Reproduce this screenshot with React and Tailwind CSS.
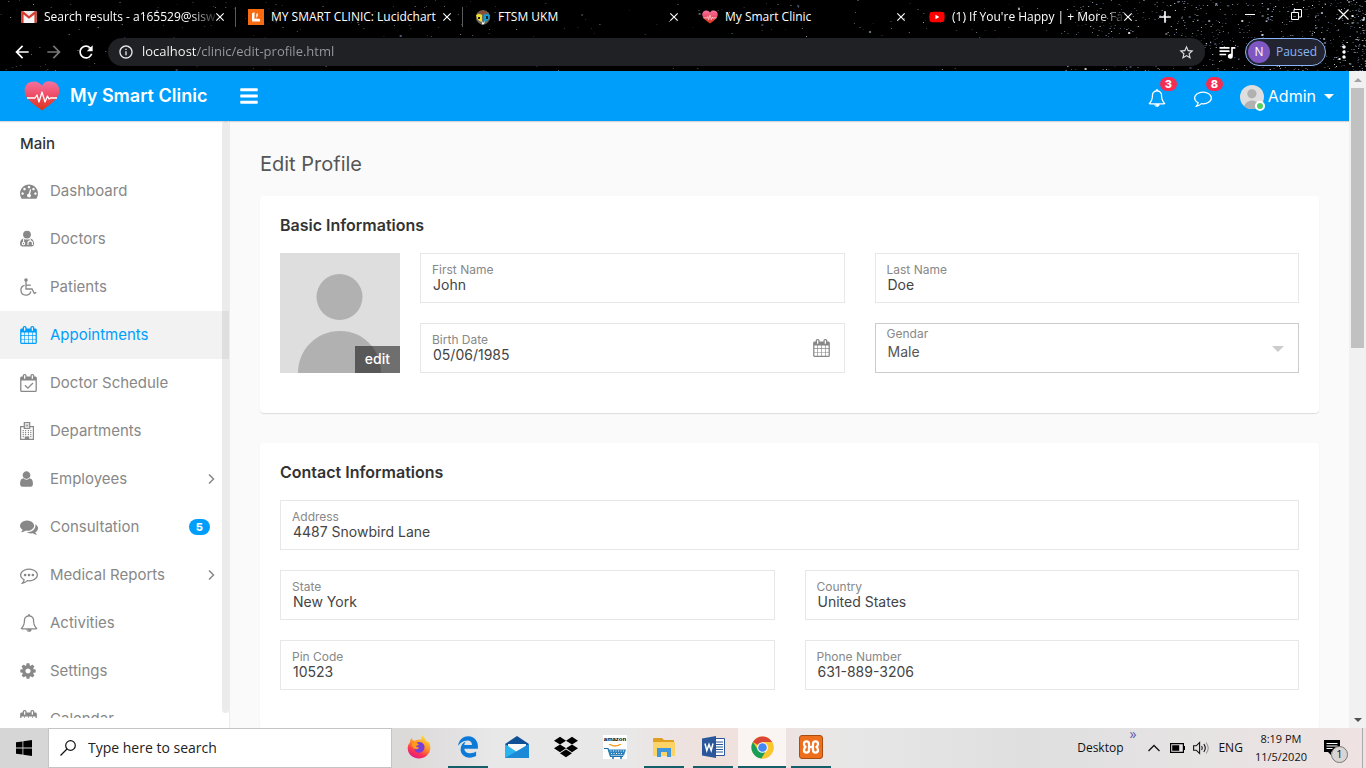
import React, { useId } from "react";
import {
  MdArrowBack,
  MdArrowForward,
  MdRefresh,
  MdInfoOutline,
  MdStarBorder,
  MdQueueMusic,
  MdClose,
  MdAdd,
  MdMoreVert,
} from "react-icons/md";
import { FaYoutube, FaDropbox, FaEdgeLegacy } from "react-icons/fa6";
import { FaBars } from "react-icons/fa";

const dot = "q0-53-37.5-90.5t-90.5-37.5-90.5 37.5-37.5 90.5 37.5 90.5 90.5 37.5 90.5-37.5 37.5-90.5z";

const bubble =
  "M896 384q-204 0-381.5 69.5t-282 187.5-104.5 255q0 112 71.5 213.5t201.5 175.5l87 50-27 96q-24 91-70 172 152-63 275-171l43-38 57 6q69 8 130 8 204 0 381.5-69.5t282-187.5 104.5-255-104.5-255-282-187.5-381.5-69.5zm896 512q0 174-120 321.5t-326 233-450 85.5q-70 0-145-8-198 175-460 242-49 14-114 22h-5q-15 0-27-10.5t-16-27.5v-1q-3-4-.5-12t2-10 4.5-9.5l6-9 7-8.5 8-9q7-8 31-34.5t34.5-38 31-39.5 32.5-51 27-59 26-76q-157-89-247.5-220t-90.5-281q0-174 120-321.5t326-233 450-85.5 450 85.5 326 233 120 321.5z";

const glyphs = {
  gauge: {
    box: "0 0 1792 1792",
    d: `M384 1152${dot}M576 704${dot}M1004 1185l101-382q6-26-7.5-48.5t-38.5-29.5-48 6.5-30 39.5l-101 382q-60 5-107 43.5t-63 98.5q-20 77 20 146t117 89 146-20 89-117q16-60-6-117t-72-91zM1664 1152${dot}M1024 512${dot}M1472 704${dot}M1792 1152q0 261-141 483-19 29-54 29h-1402q-35 0-54-29-141-221-141-483 0-182 71-348t191-286 286-191 348-71 348 71 286 191 191 286 71 348z`,
  },
  calendar: {
    box: "64 0 1664 1792",
    d: "M192 1664h288v-288h-288v288zm352 0h320v-288h-320v288zm-352-352h288v-320h-288v320zm352 0h320v-320h-320v320zm-352-384h288v-288h-288v288zm736 736h320v-288h-320v288zm-384-736h320v-288h-320v288zm768 736h288v-288h-288v288zm-384-352h320v-320h-320v320zm-352-864v-288q0-13-9.5-22.5t-22.5-9.5h-64q-13 0-22.5 9.5t-9.5 22.5v288q0 13 9.5 22.5t22.5 9.5h64q13 0 22.5-9.5t9.5-22.5zm736 864h288v-320h-288v320zm-384-384h320v-288h-320v288zm384 0h288v-288h-288v288zm32-480v-288q0-13-9.5-22.5t-22.5-9.5h-64q-13 0-22.5 9.5t-9.5 22.5v288q0 13 9.5 22.5t22.5 9.5h64q13 0 22.5-9.5t9.5-22.5zm384-64v1280q0 52-38 90t-90 38h-1408q-52 0-90-38t-38-90v-1280q0-52 38-90t90-38h128v-96q0-66 47-113t113-47h64q66 0 113 47t47 113v96h384v-96q0-66 47-113t113-47h64q66 0 113 47t47 113v96h128q52 0 90 38t38 90z",
  },
  calendarCheck: {
    box: "0 0 1664 1792",
    d: "M1303 964l-512 512q-10 9-23 9t-23-9l-288-288q-9-10-9-23t9-22l46-46q9-9 22-9t23 9l220 220 444-444q10-9 23-9t22 9l46 46q9 9 9 22t-9 23zm-1175 700h1408v-1024h-1408v1024zm384-1216v-288q0-14-9-23t-23-9h-64q-14 0-23 9t-9 23v288q0 14 9 23t23 9h64q14 0 23-9t9-23zm768 0v-288q0-14-9-23t-23-9h-64q-14 0-23 9t-9 23v288q0 14 9 23t23 9h64q14 0 23-9t9-23zm384-64v1280q0 52-38 90t-90 38h-1408q-52 0-90-38t-38-90v-1280q0-52 38-90t90-38h128v-96q0-66 47-113t113-47h64q66 0 113 47t47 113v96h384v-96q0-66 47-113t113-47h64q66 0 113 47t47 113v96h128q52 0 90 38t38 90z",
  },
  cog: {
    box: "128 0 1536 1792",
    d: "M1152 896q0-106-75-181t-181-75-181 75-75 181 75 181 181 75 181-75 75-181zm512-109v222q0 12-8 23t-20 13l-185 28q-19 54-39 91 35 50 107 138 10 12 10 25t-9 23q-27 37-99 108t-94 71q-12 0-26-9l-138-108q-44 23-91 38-16 136-29 186-7 28-36 28h-222q-14 0-24.5-8.5t-11.5-21.5l-28-184q-49-16-90-37l-141 107q-10 9-25 9-14 0-25-11-126-114-165-168-7-10-7-23 0-12 8-23 15-21 51-66.5t54-70.5q-27-50-41-99l-183-27q-13-2-21-12.5t-8-23.5v-222q0-12 8-23t19-13l186-28q14-46 39-92-40-57-107-138-10-12-10-24 0-10 9-23 26-36 98.5-107.5t94.5-71.5q13 0 26 10l138 107q44-23 91-38 16-136 29-186 7-28 36-28h222q14 0 24.5 8.5t11.5 21.5l28 184q49 16 90 37l142-107q9-9 24-9 13 0 25 10 129 119 165 170 7 8 7 22 0 12-8 23-15 21-51 66.5t-54 70.5q26 50 41 98l183 28q13 2 21 12.5t8 23.5z",
  },
  user: {
    box: "256 0 1280 1792",
    d: "M1536 1399q0 109-62.5 187t-150.5 78h-854q-88 0-150.5-78t-62.5-187q0-85 8.5-160.5t31.5-152 58.5-131 94-89 134.5-34.5q131 128 313 128t313-128q76 0 134.5 34.5t94 89 58.5 131 31.5 152 8.5 160.5zm-256-887q0 159-112.5 271.5t-271.5 112.5-271.5-112.5-112.5-271.5 112.5-271.5 271.5-112.5 271.5 112.5 112.5 271.5z",
  },
  comments: {
    box: "0 0 1792 1792",
    d: "M1408 768q0 139-94 257t-256.5 186.5-353.5 68.5q-86 0-176-16-124 88-278 128-36 9-86 16h-3q-11 0-20.5-8t-11.5-21q-1-3-1-6.5t.5-6.5 2-6l2.5-5 3.5-5.5 4-5 4.5-5 4-4.5q5-6 23-25t26-29.5 22.5-29 25-38.5 20.5-44q-124-72-195-177t-71-224q0-139 94-257t256.5-186.5 353.5-68.5 353.5 68.5 256.5 186.5 94 257zm384 256q0 120-71 224.5t-195 176.5q10 24 20.5 44t25 38.5 22.5 29 26 29.5 23 25q1 1 4 4.5t4.5 5 4 5 3.5 5.5l2.5 5 2 6 .5 6.5-1 6.5q-3 14-13 22t-22 7q-50-7-86-16-154-40-278-128-90 16-176 16-271 0-472-132 58 4 88 4 161 0 309-45t264-129q125-92 192-212t67-254q0-77-23-152 129 71 204 178t75 230z",
  },
  comment: { box: "0 0 1792 1792", d: bubble },
  commenting: {
    box: "0 0 1792 1792",
    d: `M640 896${dot}M1024 896${dot}M1408 896${dot}${bubble}`,
  },
  bell: {
    box: "0 0 1792 1792",
    d: "M912 1696q0-16-16-16-59 0-101.5-42.5t-42.5-101.5q0-16-16-16t-16 16q0 73 51.5 124.5t124.5 51.5q16 0 16-16zm-666-288h1300q-266-300-266-832 0-51-24-105t-69-103-121.5-80.5-169.5-31.5-169.5 31.5-121.5 80.5-69 103-24 105q0 532-266 832zm1482 0q0 52-38 90t-90 38h-448q0 106-75 181t-181 75-181-75-75-181h-448q-52 0-90-38t-38-90q50-42 91-88t85-119.5 74.5-158.5 50-206 19.5-260q0-152 117-282.5t307-158.5q-8-19-8-39 0-40 28-68t68-28 68 28 28 68q0 20-8 39 190 28 307 158.5t117 282.5q0 139 19.5 260t50 206 74.5 158.5 85 119.5 91 88z",
  },
};

function Glyph({ name, className }) {
  const g = glyphs[name];
  return (
    <svg viewBox={g.box} className={className} fill="currentColor" fillRule="evenodd" aria-hidden="true">
      <path d={g.d} />
    </svg>
  );
}

function DoctorIcon({ className }) {
  return (
    <svg viewBox="0 0 14 18" className={className} aria-hidden="true">
      <circle cx="7" cy="4.600" r="3.900" fill="currentColor" />
      <path
        fill="currentColor"
        d="M3.400 8.400C1 9 0 11 0 13.800C0 15.500 1 16.500 2.600 16.500h8.800C13 16.500 14 15.500 14 13.800C14 11 13 9 10.600 8.400C8.600 10 5.400 10 3.400 8.400z"
      />
      <g fill="none" stroke="#fff" strokeWidth="1.100">
        <path d="M3.600 8.800v3.400" />
        <circle cx="3.500" cy="13.500" r="1.200" />
        <path d="M10.200 8.800v2M8 15v-1.900a2.200 2.200 0 0 1 4.400 0V15" />
      </g>
    </svg>
  );
}

function WheelchairIcon({ className }) {
  return (
    <svg viewBox="0 0 17 18" className={className} fill="none" stroke="currentColor" strokeWidth="1.300" aria-hidden="true">
      <circle cx="6" cy="2" r="1.800" fill="currentColor" stroke="none" />
      <path d="M6 3v8h6l2.300 4.300 2-1" />
      <path d="M6 7.200h4.800" />
      <path d="M4.600 7.400a5 5 0 1 0 6.200 6" />
    </svg>
  );
}

function HospitalIcon({ className }) {
  return (
    <svg viewBox="0 0 14 18" className={className} aria-hidden="true">
      <g fill="none" stroke="currentColor" strokeWidth="1.200">
        <path d="M4 4.600H.6v12.800h12.800V4.600H10" />
        <path d="M4.300 6.400V.6h5.400v5.800z" />
        <path d="M6.100 2v3M7.900 2v3M6.100 3.500h1.800" strokeWidth="0.700" />
      </g>
      <g fill="currentColor">
        {[8, 10, 12].map((y) => [2.6, 5, 7.8, 10.2].map((x) => <rect key={`${x}-${y}`} x={x} y={y} width="1.200" height="1.200" />))}
        <rect x="2.600" y="14" width="1.200" height="1.200" />
        <rect x="10.200" y="14" width="1.200" height="1.200" />
        <rect x="4.800" y="14.400" width="4.400" height="3" />
      </g>
    </svg>
  );
}

function Heart({ className }) {
  const id = useId();
  return (
    <svg viewBox="0 0 36 30" className={className} aria-hidden="true">
      <defs>
        <linearGradient id={id} x1="0" y1="0" x2="0" y2="1">
          <stop offset="0" stopColor="#f472a0" />
          <stop offset="0.500" stopColor="#ee4b62" />
          <stop offset="1" stopColor="#dc3519" />
        </linearGradient>
      </defs>
      <path
        fill={`url(#${id})`}
        d="M18 29.500C13 25.500 6 21.500 2.500 16C-1 10 .5 3 6.500 1C11-.5 16 1 18 5C20-.0 25-.5 29.500 1C35.500 3 37 10 33.500 16C30 21.500 23 25.500 18 29.500z"
      />
      <path
        d="M3 17h8l2-3 2 7 3-10 3 10 2.500-6 1.500 3 1.500-1H33"
        fill="none"
        stroke="#fff"
        strokeWidth="1.300"
        strokeLinejoin="round"
      />
    </svg>
  );
}

function Avatar({ className }) {
  return (
    <svg viewBox="0 0 120 120" className={className} aria-hidden="true">
      <rect width="120" height="120" fill="#dedede" />
      <g fill="#b1b1b1">
        <circle cx="59.500" cy="44" r="23" />
        <path d="M18 120C18 97 36 78 60 78S101 97 101 120z" />
      </g>
    </svg>
  );
}

/* Star field behind the browser's tab strip, denser towards the right edge. */
function buildStars() {
  let seed = 4211;
  const next = () => {
    seed = (seed * 16807) % 2147483647;
    return seed / 2147483647;
  };
  const stars = [];
  const colours = ["#ffffff", "#9fb4d8", "#5f7396", "#c8d6f0"];
  for (let i = 0; i < 1150; i += 1) {
    const dense = i > 430;
    const x = dense ? 100 - Math.pow(next(), 1.5) * 22 : next() * 100;
    stars.push({
      x: `${x.toFixed(2)}%`,
      y: Math.floor(next() * 71),
      s: next() > 0.95 ? 2 : 1,
      o: dense ? 0.25 + next() * 0.7 : 0.15 + next() * 0.5,
      c: colours[Math.floor(next() * 4)],
    });
  }
  return stars;
}
const stars = buildStars();

function StarField() {
  return (
    <svg className="absolute inset-0 h-full w-full" aria-hidden="true">
      {stars.map((s, i) => (
        <rect key={i} x={s.x} y={s.y} width={s.s} height={s.s} fill={s.c} opacity={s.o} />
      ))}
    </svg>
  );
}

function GmailIcon() {
  return (
    <svg viewBox="0 0 14 11" className="h-3 w-4" aria-hidden="true">
      <rect width="14" height="11" rx="1" fill="#e8e8e8" />
      <path d="M2 11V3l5 4 5-4v8z" fill="#f6f6f6" />
      <path d="M0 1v9q0 1 1 1h1V3.200l5 4 5-4V11h1q1 0 1-1V1q0-1-1.500-1L7 4.600 1.500 0Q0 0 0 1z" fill="#d93a2f" />
    </svg>
  );
}

function LucidIcon() {
  return (
    <svg viewBox="0 0 16 16" className="size-4" aria-hidden="true">
      <rect width="16" height="16" fill="#f96b13" />
      <path d="M4 4.500 6.500 3v7.500L4 12z" fill="#fff" />
      <path d="M4 12l3.500-2.500 4.500.5v2.500H4z" fill="#fff" />
      <path d="M8 5l2-1v3l-2 2z" fill="#ffd7b8" />
    </svg>
  );
}

function CrestIcon() {
  return (
    <svg viewBox="0 0 16 16" className="size-4" aria-hidden="true">
      <path d="M2 4q6-6 12 0l1 6q-2 5-7 6-5-1-7-6z" fill="#6b6a5c" />
      <path d="M3 4q5-5 10 0L8 5z" fill="#8d4b32" />
      <path d="M1 6q3-2 6 0v7q-5-1-6-7z" fill="#f2dc2c" />
      <path d="M9 6q3-2 6 0 0 5-6 7z" fill="#159bd3" />
      <path d="M3 8h2v2H3zM11 7h2v3h-2z" fill="#222" />
      <path d="M7 12l1 2 2-2-1 3-2 .5z" fill="#fff" />
    </svg>
  );
}

function YoutubeIcon() {
  return (
    <span className="relative flex size-4 items-center justify-center">
      <span className="absolute h-2 w-2 bg-white" />
      <FaYoutube className="relative size-4 text-[#f00]" />
    </span>
  );
}

const tabs = [
  { title: "Search results - a165529@sisw", icon: <GmailIcon />, fade: true },
  { title: "MY SMART CLINIC: Lucidchart", icon: <LucidIcon />, line: true },
  { title: "FTSM UKM", icon: <CrestIcon />, line: true },
  { title: "My Smart Clinic", icon: <Heart className="size-4" /> },
  { title: "(1) If You're Happy | + More Fa", icon: <YoutubeIcon />, fade: true },
];

function Browser() {
  return (
    <div className="relative shrink-0 overflow-hidden bg-black font-['Open_Sans',sans-serif] text-white">
      <StarField />
      <div className="relative flex h-[38px] items-start">
        <div className="flex h-[34px] min-w-0 items-center pl-2" role="tablist">
          {tabs.map((t) => (
            <div key={t.title} className="flex w-[227px] min-w-0 items-center pr-px">
              <span className={t.line ? "h-5 w-px bg-[#5b5b5b]" : "h-5 w-px"} />
              <button type="button" role="tab" className="flex min-w-0 flex-1 items-center gap-[7px] pl-3 text-left">
                <span className="flex size-4 shrink-0 items-center justify-center">{t.icon}</span>
                <span
                  className={
                    t.fade
                      ? "text-xs whitespace-nowrap [mask-image:linear-gradient(to_right,#000_85%,rgba(0,0,0,0.15))]"
                      : "text-xs whitespace-nowrap"
                  }
                >
                  {t.title}
                </span>
              </button>
              <button type="button" aria-label="Close tab" className="mr-1.5 flex size-4 items-center justify-center">
                <MdClose className="size-3.5" />
              </button>
            </div>
          ))}
          <button type="button" aria-label="New tab" className="ml-3 flex items-center">
            <MdAdd className="size-5" />
          </button>
        </div>
        <div className="ml-auto flex h-7 items-center gap-9 pr-[17px]">
          <button type="button" aria-label="Minimise" className="h-px w-2.5 bg-white" />
          <button type="button" aria-label="Restore">
            <svg viewBox="0 0 11 11" className="size-[11px]" fill="none" stroke="#fff">
              <path d="M.5 3.500h7v7h-7zM3 3V.5h7.500V8H8" />
            </svg>
          </button>
          <button type="button" aria-label="Close window">
            <svg viewBox="0 0 11 11" className="size-[11px]" fill="none" stroke="#fff" strokeWidth="1.200">
              <path d="M.5.5l10 10M10.500.5l-10 10" />
            </svg>
          </button>
        </div>
      </div>
      <div className="relative flex h-[33px] items-start gap-3 pr-3 pl-3">
        <div className="flex h-7 items-center gap-3">
          <button type="button" aria-label="Back">
            <MdArrowBack className="size-5" />
          </button>
          <button type="button" aria-label="Forward">
            <MdArrowForward className="size-5 text-[#777]" />
          </button>
          <button type="button" aria-label="Reload">
            <MdRefresh className="size-5" />
          </button>
        </div>
        <div className="flex h-7 min-w-0 flex-1 items-center rounded-full bg-[#202124] pr-2.5 pl-2.5">
          <MdInfoOutline className="size-4 text-[#e8eaed]" />
          <input
            aria-label="Address"
            defaultValue="localhost/clinic/edit-profile.html"
            className="ml-2 min-w-0 flex-1 bg-[linear-gradient(to_right,#fff_54px,#989ba0_54px)] bg-clip-text text-[13px] text-transparent outline-none"
          />
          <MdStarBorder className="size-[17px] text-[#dadce0]" />
        </div>
        <div className="flex h-7 items-center">
          <button type="button" aria-label="Media">
            <MdQueueMusic className="size-5" />
          </button>
          <button
            type="button"
            className="ml-2 flex h-7 items-center gap-1.5 rounded-full border border-[#8ab4f8] bg-[#22252f] pr-2 pl-0.5 text-xs text-[#8ab4f8]"
          >
            <span className="flex size-[22px] items-center justify-center rounded-full bg-[#7e57c2] text-white">N</span>
            Paused
          </button>
          <button type="button" aria-label="Menu" className="ml-2">
            <MdMoreVert className="size-5" />
          </button>
        </div>
      </div>
    </div>
  );
}

function CountedButton({ label, icon, count }) {
  return (
    <button type="button" aria-label={label} className="relative mr-7 pt-1">
      <Glyph name={icon} className="size-[18px]" />
      <span className="absolute -top-2 left-3 rounded-full bg-[#f62d51] px-[5px] text-[11px] leading-[14px] font-extrabold">
        {count}
      </span>
    </button>
  );
}

function Topbar() {
  return (
    <header className="z-10 flex h-[50px] shrink-0 items-center bg-[#009efb] text-white shadow-[0_1px_1px_rgba(0,0,0,0.15)]">
      <a href="#home" className="ml-6 flex items-center gap-2.5 text-lg font-semibold">
        <Heart className="h-[30px] w-9" />
        My Smart Clinic
      </a>
      <button type="button" aria-label="Toggle menu" className="ml-8">
        <FaBars className="size-5" />
      </button>
      <div className="ml-auto flex items-center pr-[15px]">
        <CountedButton label="Notifications" icon="bell" count="3" />
        <CountedButton label="Messages" icon="comment" count="8" />
        <button type="button" className="flex items-center gap-1 text-base">
          <span className="relative pt-0.5">
            <Avatar className="size-6 rounded-full" />
            <span className="absolute -right-px -bottom-0.5 size-2.5 rounded-full border-2 border-white bg-[#55ce63]" />
          </span>
          Admin
          <span className="ml-1 border-x-[5px] border-t-[5px] border-x-transparent border-t-white" />
        </button>
      </div>
    </header>
  );
}

const menu = [
  { label: "Dashboard", icon: <Glyph name="gauge" className="size-[18px]" /> },
  { label: "Doctors", icon: <DoctorIcon className="h-[18px] w-3.5" /> },
  { label: "Patients", icon: <WheelchairIcon className="h-[18px] w-[17px]" /> },
  { label: "Appointments", icon: <Glyph name="calendar" className="h-[18px] w-[17px]" />, active: true },
  { label: "Doctor Schedule", icon: <Glyph name="calendarCheck" className="h-[18px] w-[17px]" /> },
  { label: "Departments", icon: <HospitalIcon className="h-[18px] w-3.5" /> },
  { label: "Employees", icon: <Glyph name="user" className="h-[18px] w-[13px]" />, arrow: true },
  { label: "Consultation", icon: <Glyph name="comments" className="size-[18px]" />, badge: "5" },
  { label: "Medical Reports", icon: <Glyph name="commenting" className="size-[18px]" />, arrow: true },
  { label: "Activities", icon: <Glyph name="bell" className="size-[18px]" /> },
  { label: "Settings", icon: <Glyph name="cog" className="h-[18px] w-4" /> },
  { label: "Calendar", icon: <Glyph name="calendar" className="h-[18px] w-[17px]" /> },
];

function Sidebar() {
  return (
    <aside className="relative flex w-[230px] shrink-0 flex-col border-r border-[#ececec] bg-white pb-2.5">
      <nav className="min-h-0 flex-1 overflow-hidden text-[15px] text-[#888]">
        <h2 className="flex h-[46px] items-center px-5 font-medium text-[#333]">Main</h2>
        <ul>
          {menu.map((m) => (
            <li key={m.label}>
              <a
                href={`#${m.label}`}
                className={
                  m.active
                    ? "flex h-12 items-center bg-[#f2f2f2] pr-[19px] pl-5 text-[#009efb]"
                    : "flex h-12 items-center pr-[19px] pl-5"
                }
              >
                <span className="w-[30px]">{m.icon}</span>
                {m.label}
                {m.badge && (
                  <span className="ml-auto rounded-full bg-[#009efb] px-[7px] text-[11px] leading-4 font-extrabold text-white">
                    {m.badge}
                  </span>
                )}
                {m.arrow && (
                  <svg viewBox="0 0 8 12" className="-mr-1.5 ml-auto h-3 w-2" fill="none" stroke="currentColor" strokeWidth="1.500">
                    <path d="M1 1.500 5.500 6 1 10.500" />
                  </svg>
                )}
              </a>
            </li>
          ))}
        </ul>
      </nav>
      <div className="absolute top-0 right-0 bottom-[15px] w-[7px] rounded-full bg-black/8" />
    </aside>
  );
}

function Field({ label, value, icon }) {
  const id = useId();
  return (
    <div className="flex h-[50px] items-center border border-[#e7e7e7] bg-white pr-3.5 pl-[11px]">
      <div className="flex min-w-0 flex-1 flex-col pb-px">
        <label htmlFor={id} className="text-xs leading-[15px] text-[#888]">
          {label}
        </label>
        <input id={id} defaultValue={value} className="h-4 w-full pl-px text-sm leading-4 text-[#444] outline-none" />
      </div>
      {icon}
    </div>
  );
}

function SelectField({ label, value, options }) {
  const id = useId();
  return (
    <div className="flex h-[50px] items-center border border-[#ccc] bg-white pr-3.5 pl-[11px]">
      <div className="flex min-w-0 flex-1 flex-col pb-2">
        <label htmlFor={id} className="text-xs leading-4 text-[#888]">
          {label}
        </label>
        <select id={id} defaultValue={value} className="h-5 w-full appearance-none pl-px text-sm leading-5 text-[#555] outline-none">
          {options.map((o) => (
            <option key={o}>{o}</option>
          ))}
        </select>
      </div>
      <span className="mt-0.5 border-x-[6px] border-t-[6px] border-x-transparent border-t-[#ccc]" />
    </div>
  );
}

function Card({ title, children }) {
  return (
    <section className="mb-[30px] rounded bg-white px-5 pt-[19px] pb-10 shadow-[0_1px_1px_rgba(0,0,0,0.12)]">
      <h3 className="mb-[18px] text-base leading-5 font-semibold text-[#333]">{title}</h3>
      {children}
    </section>
  );
}

function Profile() {
  return (
    <main className="min-w-0 flex-1 overflow-hidden bg-[#fafafa] px-[30px] pt-[31px]">
      <h1 className="mb-[19px] text-xl leading-[25px] text-[#565656]">Edit Profile</h1>
      <Card title="Basic Informations">
        <div className="flex gap-5">
          <div className="relative size-[120px] shrink-0">
            <Avatar className="size-[120px]" />
            <button
              type="button"
              className="absolute right-0 bottom-0 h-[27px] bg-black/50 px-2.5 pb-0.5 text-sm font-medium text-white"
            >
              edit
            </button>
          </div>
          <div className="grid flex-1 grid-cols-2 gap-x-[30px] gap-y-5">
            <Field label="First Name" value="John" />
            <Field label="Last Name" value="Doe" />
            <Field
              label="Birth Date"
              value="05/06/1985"
              icon={<Glyph name="calendar" className="h-[18px] w-[17px] text-[#888]" />}
            />
            <SelectField label="Gendar" value="Male" options={["Male", "Female"]} />
          </div>
        </div>
      </Card>
      <Card title="Contact Informations">
        <div className="grid grid-cols-2 gap-x-[30px] gap-y-5">
          <div className="col-span-2">
            <Field label="Address" value="4487 Snowbird Lane" />
          </div>
          <Field label="State" value="New York" />
          <Field label="Country" value="United States" />
          <Field label="Pin Code" value="10523" />
          <Field label="Phone Number" value="631-889-3206" />
        </div>
      </Card>
    </main>
  );
}

function PageScrollbar() {
  return (
    <div className="flex w-[17px] shrink-0 flex-col items-center bg-[#f1f1f1]">
      <span className="flex h-[17px] items-center">
        <span className="border-x-4 border-b-4 border-x-transparent border-b-[#a3a3a3]" />
      </span>
      <div className="h-[260px] w-[13px] bg-[#c1c1c1]" />
      <span className="mt-auto flex h-[17px] items-center">
        <span className="border-x-4 border-t-4 border-x-transparent border-t-[#505050]" />
      </span>
    </div>
  );
}

function FirefoxIcon() {
  return (
    <svg viewBox="0 0 24 24" className="size-6" aria-hidden="true">
      <defs>
        <linearGradient id="fox" x1="0.800" y1="0" x2="0.300" y2="1">
          <stop offset="0" stopColor="#ffe83f" />
          <stop offset="0.450" stopColor="#ff9325" />
          <stop offset="0.750" stopColor="#fb3650" />
          <stop offset="1" stopColor="#e31587" />
        </linearGradient>
      </defs>
      <path
        d="M16 0c-2 2-1.500 3.500-1.800 4.800C11 4 8.500 5 7.500 6 6 5.500 5 4.500 4.800 3 3.500 4 3 6 3 7.500 1 9.500.5 12 .8 14.500 1.500 20 6.500 23.500 12 23.500S23 19.500 23.300 13.500C23.500 10 22 7 20.500 5.500c.3 1 .3 1.800.2 2.500C19.500 5 16.500 3 16 0z"
        fill="url(#fox)"
      />
      <path d="M12 7c4 0 6 3 5.500 6-.5 3-3 5-6 4.800C8.500 17.500 7 15 7.500 13c1 1.500 3 1 4.500 0-2 0-2.500-1.500-4.500-1.500C8 9 10 7 12 7z" fill="#7a3fd6" />
      <path d="M5 8c2-1 4-.5 5 0l2 1.500c-1 .8-2.500 1-3 2.500l3 .5c-1 2-3.500 2-5 1C5 12 4.500 10 5 8z" fill="#ff9a1f" />
    </svg>
  );
}

function MailIcon() {
  return (
    <svg viewBox="0 0 24 22" className="h-[22px] w-6" aria-hidden="true">
      <path d="M0 8 12 0l12 8v3H0z" fill="#0f4f96" />
      <path d="M3 8h18v8H3z" fill="#f7f7f7" />
      <path d="M0 8l12 8L24 8v14H0z" fill="#2bb3ef" />
      <path d="M0 22 24 8v14z" fill="#1c8ad6" />
    </svg>
  );
}

function AmazonIcon() {
  return (
    <span className="flex size-6 flex-col items-center bg-white">
      <span className="font-['Liberation_Sans',sans-serif] text-[6px] leading-[9px] font-bold text-black">amazon</span>
      <svg viewBox="0 0 24 15" className="h-[15px] w-6" aria-hidden="true">
        <path d="M6 0q6 4 12 0" fill="none" stroke="#f59a1b" strokeWidth="1.400" />
        <path d="M1 4.500h4l2.500 8H20" fill="none" stroke="#1f6fa8" strokeWidth="1.200" />
        <path d="M5 5.500h18l-2 6H7z" fill="#2c82bd" />
        <path d="M7.500 7h14M8 9.500h12.500" stroke="#fff" strokeDasharray="1 1.500" />
        <circle cx="10" cy="14" r="1" fill="#1f6fa8" />
        <circle cx="18" cy="14" r="1" fill="#1f6fa8" />
      </svg>
    </span>
  );
}

function FolderIcon() {
  return (
    <svg viewBox="0 0 22 19" className="h-[19px] w-[22px]" aria-hidden="true">
      <path d="M0 1q0-1 1-1h8l2 2h10v4H0z" fill="#dfa021" />
      <path d="M0 4h22v14H0z" fill="#fbd367" />
      <path d="M4 10h14v9h-4v-5H8v5H4z" fill="#3f97dd" />
    </svg>
  );
}

function WordIcon() {
  return (
    <svg viewBox="0 0 23 22" className="h-[22px] w-[23px]" aria-hidden="true">
      <path d="M12 2.500h10.500v17H12z" fill="#fff" stroke="#2b579a" />
      <path d="M14 6h7M14 8.500h7M14 11h7M14 13.500h7M14 16h7" stroke="#2b579a" />
      <path d="M0 2.500 14 0v22L0 19.500z" fill="#2b579a" />
      <path d="M3 7.500l1.800 7L7 8.500l2.200 6 1.800-7" fill="none" stroke="#fff" strokeWidth="1.500" />
    </svg>
  );
}

function ChromeIcon() {
  return (
    <svg viewBox="0 0 24 24" className="size-[23px]" aria-hidden="true">
      <circle cx="12" cy="12" r="11.500" fill="#fbc52d" />
      <path d="M12 12 2 6.300A11.500 11.500 0 0 1 22 6.300H12z" fill="#dc4637" />
      <path d="M2 6.200A11.500 11.500 0 0 0 11 23.500l5.200-9.200L12 12 7 14z" fill="#1a9f5a" />
      <path d="M12 6.300h10a11.500 11.500 0 0 1-11 17.200l5.500-9z" fill="#fbc52d" />
      <circle cx="12" cy="12" r="5.600" fill="#fff" />
      <circle cx="12" cy="12" r="4.500" fill="#4587f3" />
    </svg>
  );
}

function XamppIcon() {
  return (
    <svg viewBox="0 0 24 24" className="size-6" aria-hidden="true">
      <rect x="0.500" y="0.500" width="23" height="23" rx="2.500" fill="#ee6f1c" stroke="#a94c10" />
      <g fill="none" stroke="#fff" strokeWidth="2.300" strokeLinejoin="round">
        <path d="M10 12V9q0-2.600-2.500-2.600T5 9q0 2 1.600 3Q5 13 5 15q0 2.600 2.500 2.600T10 15v-3" />
        <path d="M14 12V9q0-2.600 2.500-2.600T19 9q0 2-1.600 3Q19 13 19 15q0 2.600-2.500 2.600T14 15v-3" />
        <path d="M9.500 12h5" />
      </g>
    </svg>
  );
}

const apps = [
  { name: "Firefox", icon: <FirefoxIcon /> },
  { name: "Edge", icon: <FaEdgeLegacy className="size-[22px] text-[#0d7ad8]" />, open: true },
  { name: "Mail", icon: <MailIcon /> },
  { name: "Dropbox", icon: <FaDropbox className="size-6 text-black" /> },
  { name: "Amazon", icon: <AmazonIcon /> },
  { name: "Explorer", icon: <FolderIcon />, open: true },
  { name: "Word", icon: <WordIcon />, open: true },
  { name: "Chrome", icon: <ChromeIcon />, active: true },
  { name: "XAMPP", icon: <XamppIcon />, open: true },
];

function Taskbar() {
  return (
    <footer className="flex h-10 shrink-0 bg-[linear-gradient(to_right,#d6d6d6,#dcd9d9_30%,#e8e8e8_36%,#e9e8e8_46%,#efe0dc_52%,#efe2de_56%,#e7e7e7_62%,#dfdfdf_75%,#e6e3e3_88%,#efe2e2)] font-['Open_Sans',sans-serif] text-xs text-[#111]">
      <button type="button" aria-label="Start" className="flex w-12 items-center justify-center">
        <svg viewBox="0 0 16 16" className="size-4" fill="#000">
          <path d="M0 2.300 6.500 1.400v6.200H0zM7.300 1.300 16 0v7.600H7.300zM0 8.400h6.500v6.200L0 13.700zM7.300 8.400H16V16l-8.700-1.300z" />
        </svg>
      </button>
      <label className="flex w-[344px] items-center gap-3 border border-[#c4c4c4] bg-white pl-[11px]">
        <svg viewBox="0 0 16 16" className="size-4" fill="none" stroke="#111" strokeWidth="1.200">
          <circle cx="10.500" cy="5.500" r="4.800" />
          <path d="M7 9 .5 15.500" />
        </svg>
        <input
          type="search"
          aria-label="Search"
          placeholder="Type here to search"
          className="min-w-0 flex-1 text-sm outline-none placeholder:text-[#222]"
        />
      </label>
      <div className="ml-[3px] flex gap-px">
        {apps.map((a) => (
          <button
            key={a.name}
            type="button"
            aria-label={a.name}
            className={a.active ? "flex w-12 flex-col items-center bg-[#faf5f3]" : "flex w-12 flex-col items-center"}
          >
            <span className="flex h-[38px] items-center">{a.icon}</span>
            {a.open && <span className="h-0.5 w-10 bg-[#155f6b]" />}
            {a.active && <span className="h-0.5 w-12 bg-[#155f6b]" />}
          </button>
        ))}
      </div>
      <div className="ml-auto flex items-center">
        <span>Desktop</span>
        <span className="mb-7 ml-1.5 text-sm text-[#5a5ab0]">»</span>
        <button type="button" aria-label="Show hidden icons" className="ml-3">
          <svg viewBox="0 0 12 8" className="h-2 w-3" fill="none" stroke="#111" strokeWidth="1.300">
            <path d="M.5 7 6 1.500 11.500 7" />
          </svg>
        </button>
        <svg viewBox="0 0 15 10" className="ml-2.5 h-2.5 w-[15px]" aria-hidden="true">
          <path d="M.6.6h12.800v8.800H.6z" fill="none" stroke="#000" strokeWidth="1.200" />
          <path d="M2.200 2.200h7v5.600h-7zM13.500 3H15v4h-1.500z" fill="#000" />
        </svg>
        <svg viewBox="0 0 17 14" className="ml-2 h-3.5 w-[17px]" fill="none" stroke="#111" strokeWidth="1.100" aria-hidden="true">
          <path d="M.6 4.800h2.600L6.600 1.500v11L3.200 9.200H.6z" />
          <path d="M8.600 5q1.500 2 0 4M10.800 3.200q3 3.800 0 7.600" />
          <path d="M13 1.500q4.500 5.500 0 11" stroke="#999" />
        </svg>
        <span className="ml-2">ENG</span>
        <span className="ml-3 text-center text-[11px] leading-[18px]">
          8:19 PM
          <br />
          11/5/2020
        </span>
        <button type="button" aria-label="Notification centre" className="relative mr-3.5 ml-[17px] h-6 w-6">
          <svg viewBox="0 0 16 15" className="absolute top-1 left-0 h-[15px] w-4">
            <path d="M0 0h16v12H7v3l-3-3H0z" fill="#000" />
            <path d="M2.500 3.500h11M2.500 6h11M2.500 8.500h6" stroke="#fff" />
          </svg>
          <span className="absolute top-2.5 left-[7px] flex size-[17px] items-center justify-center rounded-full border border-[#777] bg-[#d9d5d5] text-[11px]">
            1
          </span>
        </button>
        <span className="h-full w-1 border-l border-[#aaa]" />
      </div>
    </footer>
  );
}

export default function App() {
  return (
    <div className="flex h-screen flex-col overflow-hidden font-['Inter',sans-serif]">
      <Browser />
      <div className="flex min-h-0 flex-1">
        <div className="flex min-w-0 flex-1 flex-col">
          <Topbar />
          <div className="flex min-h-0 flex-1">
            <Sidebar />
            <Profile />
          </div>
        </div>
        <PageScrollbar />
      </div>
      <Taskbar />
    </div>
  );
}
